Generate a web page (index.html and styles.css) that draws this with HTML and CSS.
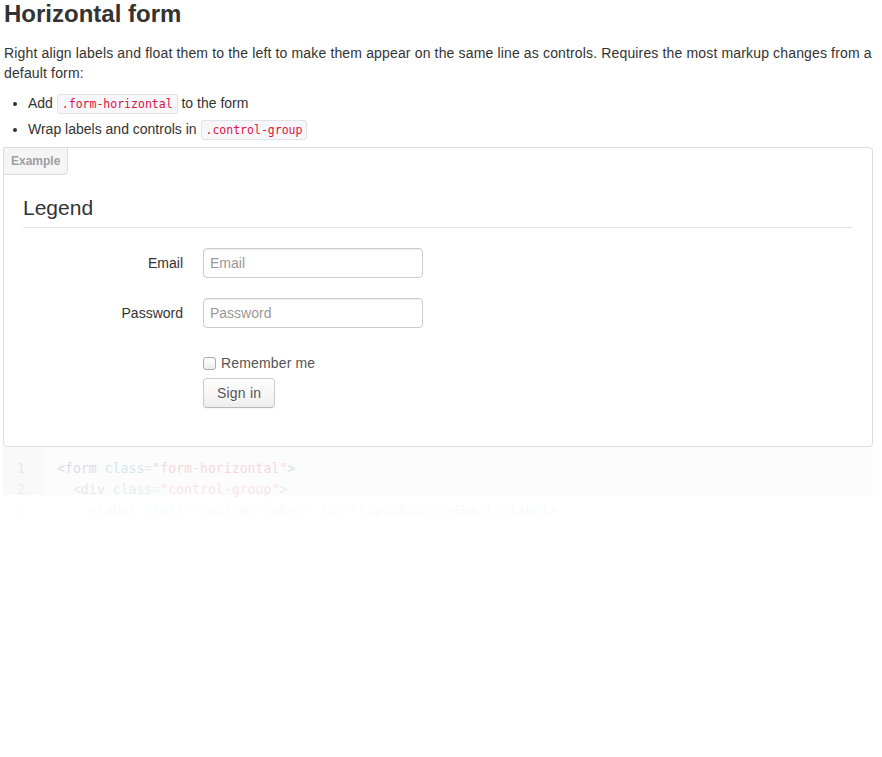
FILE: index.html
```html
<!DOCTYPE html>
<html lang="en">
<head>
<meta charset="utf-8">
<title>Horizontal form</title>
<link rel="stylesheet" href="styles.css">
</head>
<body>
<div class="page">
  <h3 class="title">Horizontal form</h3>
  <p class="lead">Right align labels and float them to the left to make them appear on the same line as controls. Requires the most markup changes from a default form:</p>
  <ul class="notes">
    <li>Add <code class="inline-code">.form-horizontal</code> to the form</li>
    <li>Wrap labels and controls in <code class="inline-code">.control-group</code></li>
  </ul>
  <div class="example">
    <div class="example-tab">Example</div>
    <form class="form-horizontal">
      <div class="legend">Legend</div>
      <div class="control-group">
        <label class="control-label" for="inputEmail">Email</label>
        <div class="controls">
          <input class="text-input" type="text" id="inputEmail" placeholder="Email">
        </div>
      </div>
      <div class="control-group">
        <label class="control-label" for="inputPassword">Password</label>
        <div class="controls">
          <input class="text-input" type="password" id="inputPassword" placeholder="Password">
        </div>
      </div>
      <div class="control-group">
        <div class="controls">
          <label class="checkbox"><input class="check" type="checkbox"> Remember me</label>
          <button type="button" class="btn">Sign in</button>
        </div>
      </div>
    </form>
  </div>
  <pre class="code"><div class="row r1"><span class="num">1.</span><span class="src"><span class="tag">&lt;form</span> <span class="atn">class</span><span class="pun">=</span><span class="atv">"form-horizontal"</span><span class="tag">&gt;</span></span></div><div class="row r2"><span class="num">2.</span><span class="src">  <span class="tag">&lt;div</span> <span class="atn">class</span><span class="pun">=</span><span class="atv">"control-group"</span><span class="tag">&gt;</span></span></div><div class="row r3"><span class="num">3.</span><span class="src">    <span class="tag">&lt;label</span> <span class="atn">class</span><span class="pun">=</span><span class="atv">"control-label"</span> <span class="atn">for</span><span class="pun">=</span><span class="atv">"inputEmail"</span><span class="tag">&gt;</span>Email<span class="tag">&lt;/label&gt;</span></span></div></pre>
</div>
</body>
</html>
```

FILE: styles.css
```css
html, body {
  margin: 0;
  padding: 0;
  background: #fff;
}

body {
  font-family: "Liberation Sans", Arial, Helvetica, sans-serif;
  font-size: 14px;
  line-height: 20px;
  color: #333;
}

.page {
  width: 870px;
  padding: 0 9px 0 3px;
}

.title {
  margin: 0 0 15px;
  padding-left: 1px;
  font-size: 24px;
  line-height: 28px;
  font-weight: bold;
  color: #333;
}

.lead {
  margin: 0;
  padding-left: 1px;
  letter-spacing: 0.15px;
}

.notes {
  margin: 7px 0 5px;
  padding-left: 25px;
}

.notes li {
  line-height: 26px;
}

.inline-code {
  font-family: "DejaVu Sans Mono", "Liberation Mono", monospace;
  font-size: 11.5px;
  line-height: 14px;
  padding: 2px 4px;
  color: #dd1144;
  background: #f7f7f9;
  border: 1px solid #e1e1e8;
  border-radius: 3px;
}

.example {
  position: relative;
  border: 1px solid #ddd;
  border-radius: 4px;
  padding: 40px 19px 18px;
  background: #fff;
}

.example-tab {
  position: absolute;
  top: -1px;
  left: -1px;
  padding: 4px 7px 3px;
  font-size: 12px;
  line-height: 19px;
  font-weight: bold;
  color: #9da0a4;
  background: #f5f5f5;
  border: 1px solid #ddd;
  border-radius: 0 0 4px 0;
}

.form-horizontal {
  margin: 0;
}

.legend {
  font-size: 21px;
  line-height: 39px;
  color: #333;
  border-bottom: 1px solid #e5e5e5;
  margin-bottom: 20px;
}

.control-group {
  display: flex;
  margin-bottom: 20px;
}

.control-label {
  width: 160px;
  padding-top: 5px;
  text-align: right;
  flex: none;
}

.controls {
  margin-left: 20px;
  display: flex;
  flex-direction: column;
  align-items: flex-start;
}

.control-group > .controls:first-child {
  margin-left: 180px;
}

.text-input {
  box-sizing: border-box;
  width: 220px;
  height: 30px;
  margin: 0;
  padding: 4px 6px;
  font-family: inherit;
  font-size: 14px;
  line-height: 20px;
  color: #555;
  background: #fff;
  border: 1px solid #ccc;
  border-radius: 4px;
  box-shadow: inset 0 1px 1px rgba(0, 0, 0, 0.075);
  outline: none;
}

.text-input::placeholder {
  color: #999;
}

.checkbox {
  display: flex;
  align-items: center;
  padding-top: 5px;
  margin-bottom: 5px;
  line-height: 20px;
  color: #555;
  letter-spacing: 0.15px;
}

.check {
  width: 13px;
  height: 13px;
  margin: 0 5px 0 0;
  appearance: none;
  -webkit-appearance: none;
  border: 1px solid #aaa;
  border-radius: 3px;
  background: linear-gradient(#fff, #ececec);
  box-sizing: border-box;
}

.btn {
  box-sizing: border-box;
  height: 30px;
  padding: 4px 13px;
  font-family: inherit;
  font-size: 14px;
  line-height: 20px;
  color: #555;
  letter-spacing: 0.2px;
  text-shadow: 0 1px 1px rgba(255, 255, 255, 0.75);
  background: linear-gradient(#fff, #eee);
  border: 1px solid #ccc;
  border-bottom-color: #bbb;
  border-radius: 4px;
  box-shadow: 0 1px 2px rgba(0, 0, 0, 0.05);
}

.code {
  margin: 0;
  padding: 11px 0 0;
  font-family: "DejaVu Sans Mono", "Liberation Mono", monospace;
  font-size: 13.2px;
  line-height: 21px;
  background: linear-gradient(to right, #f9f9f9 40px, #fcfcfc 40px) no-repeat 0 0 / 100% 48px;
  white-space: pre;
}

.row {
  display: flex;
}

.num {
  width: 40px;
  flex: none;
  box-sizing: border-box;
  padding-left: 14px;
  color: #999;
}

.src {
  padding-left: 14px;
  color: #48484c;
}

.tag { color: #1e347b; }
.atn { color: teal; }
.pun { color: #93a1a1; }
.atv { color: #dd1144; }

.r1 { opacity: 0.16; }
.r2 { opacity: 0.1; }
.r3 { opacity: 0.025; }
```
